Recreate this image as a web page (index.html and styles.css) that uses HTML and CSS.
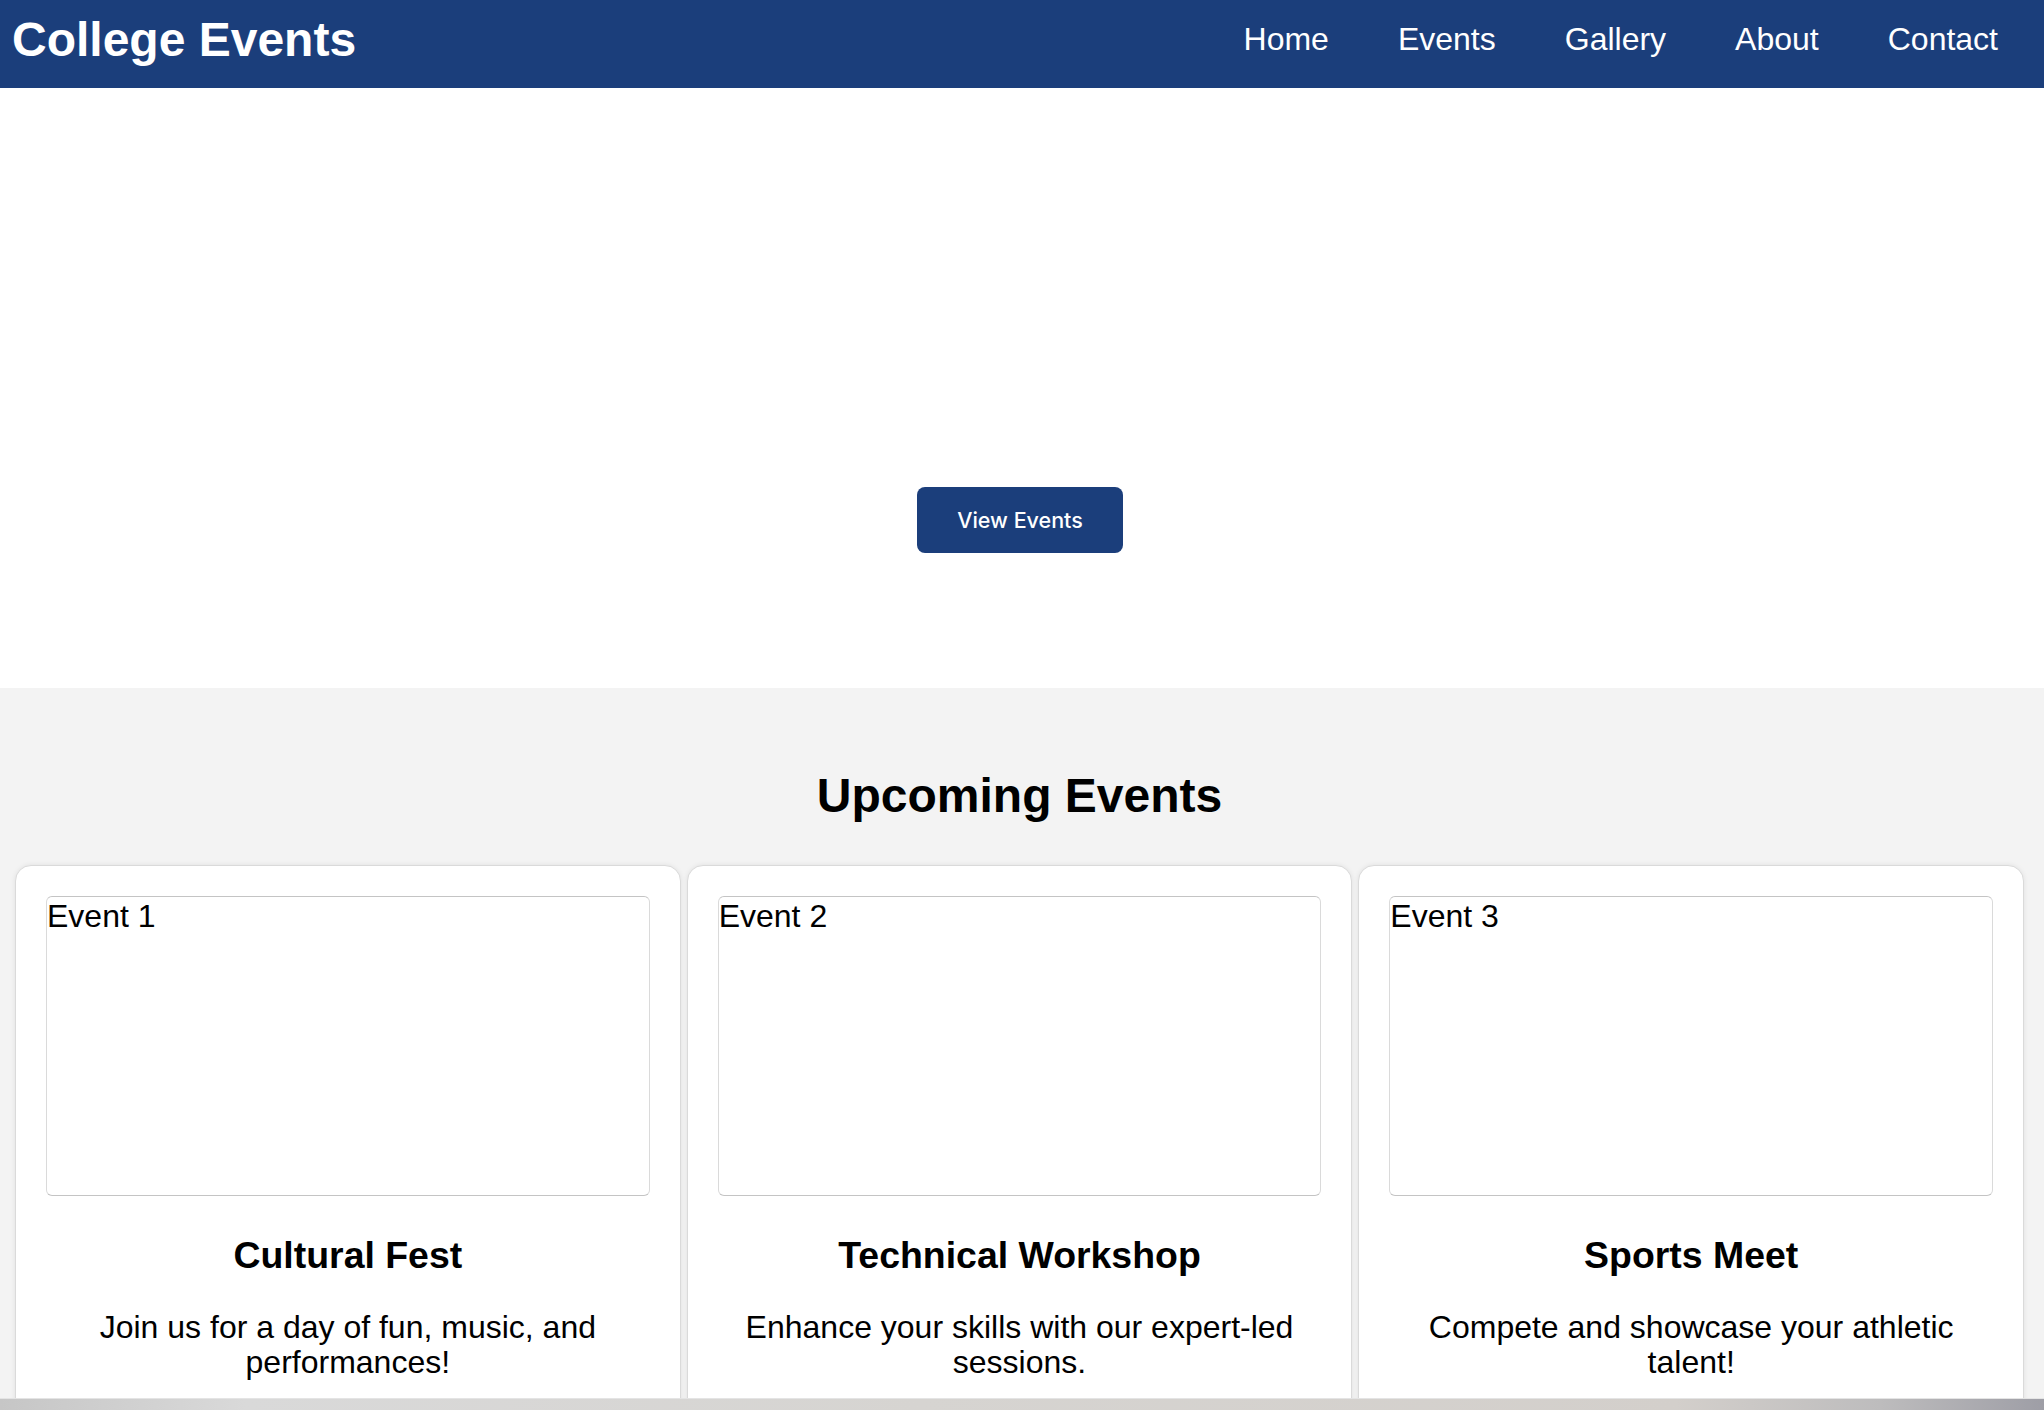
FILE: index.html
```html
<!DOCTYPE html>
<html lang="en">
<head>
<meta charset="utf-8">
<title>College Events</title>
<link rel="stylesheet" href="styles.css">
</head>
<body>
<header class="site-header">
  <h1 class="brand">College Events</h1>
  <nav class="nav">
    <a href="#" class="nav-link">Home</a>
    <a href="#" class="nav-link">Events</a>
    <a href="#" class="nav-link">Gallery</a>
    <a href="#" class="nav-link">About</a>
    <a href="#" class="nav-link">Contact</a>
  </nav>
</header>

<section class="hero">
  <a href="#" class="btn">View Events</a>
</section>

<section class="events">
  <h2 class="events-title">Upcoming Events</h2>
  <div class="cards">
    <article class="card">
      <div class="event-img">Event 1</div>
      <h3 class="card-title">Cultural Fest</h3>
      <p class="card-text">Join us for a day of fun, music, and performances!</p>
    </article>
    <article class="card">
      <div class="event-img">Event 2</div>
      <h3 class="card-title">Technical Workshop</h3>
      <p class="card-text">Enhance your skills with our expert-led sessions.</p>
    </article>
    <article class="card">
      <div class="event-img">Event 3</div>
      <h3 class="card-title">Sports Meet</h3>
      <p class="card-text">Compete and showcase your athletic talent!</p>
    </article>
  </div>
</section>

<div class="hscroll"></div>
</body>
</html>
```

FILE: styles.css
```css
html, body {
  margin: 0;
  padding: 0;
}

body {
  font-family: "Liberation Sans", Arial, Helvetica, sans-serif;
  font-size: 32px;
  color: #000;
  background: #fff;
}

.site-header {
  display: flex;
  justify-content: space-between;
  align-items: flex-start;
  height: 88px;
  box-sizing: border-box;
  padding: 0 46px 0 12px;
  background: #1b3e7b;
  color: #fff;
}

.brand {
  margin: 12px 0 0;
  font-size: 48px;
  font-weight: bold;
  line-height: normal;
}

.nav {
  display: flex;
  gap: 69px;
  margin-top: 20.5px;
}

.nav-link {
  color: #fff;
  text-decoration: none;
  font-size: 32px;
  line-height: normal;
}

.hero {
  height: 600px;
  box-sizing: border-box;
  padding-top: 399px;
  display: flex;
  justify-content: center;
  align-items: flex-start;
  background: #fff;
}

.btn {
  display: flex;
  align-items: center;
  justify-content: center;
  width: 206px;
  height: 66px;
  box-sizing: border-box;
  border-radius: 8px;
  background: #1b3e7b;
  color: #fff;
  text-decoration: none;
  font-family: Inter, "Noto Sans", sans-serif;
  font-size: 21.5px;
  font-weight: 500;
  margin-left: -4px;
}

.events {
  background: #f3f3f3;
  padding: 40px 20px 0 15px;
}

.events-title {
  margin: 40px 0 41.5px;
  font-size: 48px;
  font-weight: bold;
  text-align: center;
  line-height: normal;
}

.cards {
  display: flex;
  gap: 6px;
}

.card {
  flex: 1 1 0;
  background: #fff;
  border: 1px solid #dadada;
  border-radius: 16px;
  box-shadow: 0 0 5px rgba(0, 0, 0, 0.08);
  padding: 30px 30px 30px;
  text-align: center;
}

.event-img {
  height: 300px;
  box-sizing: border-box;
  border-top: 1px solid #c4c4c4;
  border-bottom: 1px solid #c4c4c4;
  border-left: 1px solid #dadada;
  border-right: 1px solid #dadada;
  border-radius: 6px;
  text-align: left;
  font-size: 32px;
  line-height: normal;
  padding-top: 1px;
}

.card-title {
  margin: 38.5px 0 0;
  font-size: 37.44px;
  font-weight: bold;
  line-height: normal;
}

.card-text {
  margin: 32.5px 0 32px;
  font-size: 32px;
  line-height: 1.115;
}

.hscroll {
  position: fixed;
  left: 0;
  right: 0;
  bottom: 0;
  height: 12px;
  border-top: 1px solid #e4e4e4;
  box-sizing: border-box;
  background: linear-gradient(to right, #c6c6c6 0%, #d9d9d9 12%, #d6d4d1 45%, #d3cfcb 82%, #bdbcbd 92%, #9e9ea6 100%);
}
```
